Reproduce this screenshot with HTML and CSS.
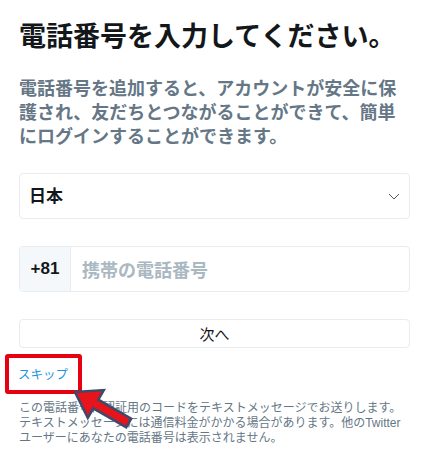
FILE: index.html
```html
<!DOCTYPE html>
<html lang="ja">
<head>
  <meta charset="UTF-8">
  <title>電話番号を入力してください。</title>
  <link rel="stylesheet" href="styles.css">
</head>
<body>
  <div class="page">
    <!-- 見出し -->
    <h1 class="title">電話番号を入力してください。</h1>
    <p class="lead">電話番号を追加すると、アカウントが安全に保<br>護され、友だちとつながることができて、簡単<br>にログインすることができます。</p>

    <!-- 国の選択 -->
    <div class="select">
      <span class="select-value">日本</span>
      <svg class="chevron" width="12" height="7" viewBox="0 0 12 7">
        <path d="M1 1 L6 6 L11 1" fill="none" stroke="#555" stroke-width="1"/>
      </svg>
    </div>

    <!-- 電話番号 -->
    <div class="phone">
      <span class="phone-code">+81</span>
      <span class="phone-placeholder">携帯の電話番号</span>
    </div>

    <button class="next" type="button">次へ</button>

    <a class="skip" href="#">スキップ</a>

    <p class="note">この電話番号に認証用のコードをテキストメッセージでお送りします。<br>テキストメッセージには通信料金がかかる場合があります。他のTwitter<br>ユーザーにあなたの電話番号は表示されません。</p>
  </div>

  <!-- 注釈の矢印 -->
  <svg class="arrow" width="80" height="55" viewBox="60 380 80 55">
    <polygon points="75,392 103.8,390.1 98.3,399.7 131.2,418.7 126.2,427.3 93.3,408.3 87.8,417.9"
             fill="#e8141b" stroke="#3d4a6b" stroke-width="2.5" stroke-linejoin="miter"/>
  </svg>
</body>
</html>
```

FILE: styles.css
```css
* {
  margin: 0;
  padding: 0;
  box-sizing: border-box;
}
body {
  position: relative;
  background: #fff;
  font-family: "Liberation Sans", "Noto Sans CJK JP", sans-serif;
  color: #14171a;
}

.page {
  display: flex;
  flex-direction: column;
  align-items: flex-start;
  width: 410px;
  padding: 21px 0 0 19px;
}

/* 見出し */
.title {
  font-size: 27px;
  line-height: 32px;
  font-weight: bold;
  white-space: nowrap;
}
.lead {
  margin-top: 24px;
  font-size: 18px;
  line-height: 24px;
  font-weight: bold;
  color: #657786;
  white-space: nowrap;
}

/* 入力欄 */
.select {
  display: flex;
  align-items: center;
  justify-content: space-between;
  width: 100%;
  height: 46px;
  margin-top: 24px;
  padding: 0 9px 0 9px;
  border: 1px solid #e6ecf0;
  border-radius: 4px;
}
.select-value {
  font-size: 17px;
  font-weight: bold;
  margin-top: -4px;
}
.chevron {
  margin-top: 1px;
}

.phone {
  display: flex;
  align-items: stretch;
  width: 100%;
  height: 46px;
  margin-top: 27px;
  border: 1px solid #e6ecf0;
  border-radius: 4px;
  overflow: hidden;
}
.phone-code {
  display: flex;
  align-items: center;
  justify-content: center;
  width: 51px;
  background: #f5f8fa;
  border-right: 1px solid #e6ecf0;
  font-size: 17px;
  font-weight: bold;
}
.phone-placeholder {
  display: flex;
  align-items: center;
  padding-left: 11px;
  font-size: 18px;
  font-weight: bold;
  color: #aab8c2;
}

.next {
  width: 100%;
  height: 29px;
  margin-top: 27px;
  background: #fff;
  border: 1px solid #e6ecf0;
  border-radius: 4px;
  font-family: inherit;
  font-size: 15px;
  color: #14171a;
}

/* スキップ(赤枠付き) */
.skip {
  margin: 6px 0 0 -14px;
  width: 77px;
  height: 40px;
  padding: 8px 0 0 9px;
  border: 4px solid #e60012;
  border-radius: 3px;
  font-size: 12.5px;
  line-height: 18px;
  color: #1b95e0;
  text-decoration: none;
}

.note {
  margin-top: 7px;
  font-size: 12px;
  line-height: 15px;
  color: #657786;
  white-space: nowrap;
}

/* 注釈 */
.arrow {
  position: absolute;
  left: 60px;
  top: 380px;
}
```
